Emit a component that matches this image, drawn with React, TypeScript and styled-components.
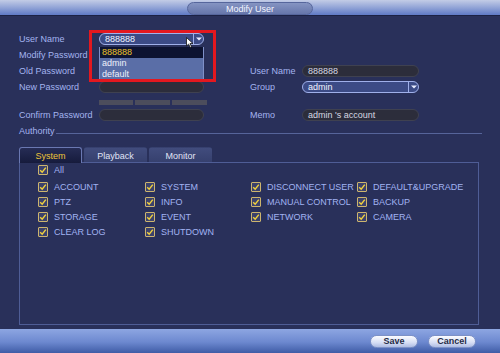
import React from 'react';
import styled, { createGlobalStyle } from 'styled-components';

const GlobalStyle = createGlobalStyle`
  html, body {
    margin: 0;
    padding: 0;
    background: #29305a;
  }
  body {
    font-family: "Liberation Sans", Arial, sans-serif;
  }
`;

const Screen = styled.div`
  width: 500px;
  height: 353px;
  display: flex;
  flex-direction: column;
  overflow: hidden;
  background: #29305a;
`;

const TitleBar = styled.div`
  height: 16px;
  flex: none;
  display: flex;
  align-items: center;
  justify-content: center;
  background: linear-gradient(#c3cce6 0%, #97a8d8 45%, #5f7ac6 100%);
  border-bottom: 1px solid #1c2246;
  box-sizing: border-box;
`;

const TitlePill = styled.div`
  width: 126px;
  height: 13px;
  margin-top: 2px;
  border-radius: 7px;
  background: linear-gradient(#8594c2, #6676ab);
  border: 1px solid #56669c;
  box-sizing: border-box;
  display: flex;
  align-items: center;
  justify-content: center;
  color: #f4f6ff;
  font-size: 9px;
`;

const Content = styled.div`
  flex: 1;
  padding: 0 21px 4px 19px;
  display: flex;
  flex-direction: column;
`;

const FormGrid = styled.div`
  margin-top: 15px;
  display: grid;
  grid-template-columns: 80px 105px 46px 52px 117px;
  grid-template-rows: 16px 16px 16px 16px 12px 16px;
  align-items: center;
`;

const Label = styled.div<{ $col: number; $row: number }>`
  grid-column: ${p => p.$col};
  grid-row: ${p => p.$row};
  color: #a4b4ef;
  font-size: 9px;
  white-space: nowrap;
`;

const Cell = styled.div<{ $col: number; $row: number }>`
  grid-column: ${p => p.$col};
  grid-row: ${p => p.$row};
  position: relative;
`;

const TextBox = styled.div`
  height: 12px;
  border-radius: 6px;
  background: #2c2d3b;
  border: 1px solid #3f4150;
  box-sizing: border-box;
  color: #d6d8e2;
  font-size: 9px;
  line-height: 10px;
  padding-left: 5px;
  white-space: nowrap;
`;

const SelectBox = styled.div`
  height: 12px;
  border-radius: 6px;
  background: #3c4b86;
  border: 1px solid #a0b0ea;
  box-sizing: border-box;
  display: flex;
  align-items: center;
  color: #f2f4ff;
  font-size: 9px;
`;

const SelectText = styled.span`
  flex: 1;
  padding-left: 5px;
  line-height: 10px;
`;

const SelectArrow = styled.span`
  width: 9px;
  height: 10px;
  border-left: 1px solid #a0b0ea;
  display: flex;
  align-items: center;
  justify-content: center;
`;

const Strength = styled.div`
  display: grid;
  grid-template-columns: 34px 35px 35px;
  gap: 2px;
  height: 5px;
  align-self: start;
  margin-top: 2px;
`;

const StrengthBar = styled.div`
  background: #4c4d5c;
`;

const DropList = styled.div`
  position: absolute;
  left: 0;
  top: 14px;
  width: 105px;
  border-left: 1px solid #7f90c8;
  border-right: 1px solid #7f90c8;
  box-sizing: border-box;
  background: #5a6ea7;
  z-index: 2;
`;

const DropItem = styled.div<{ $selected?: boolean }>`
  height: 11px;
  line-height: 11px;
  padding-left: 2px;
  font-size: 9px;
  color: ${p => (p.$selected ? '#ecc428' : '#eef1fb')};
  background: ${p => (p.$selected ? '#0d1331' : 'transparent')};
`;

const Highlight = styled.div`
  position: absolute;
  left: -10px;
  top: -3px;
  width: 127px;
  height: 52px;
  border: 3px solid #e3181f;
  box-sizing: border-box;
  z-index: 3;
  pointer-events: none;
`;

const Cursor = styled.svg`
  position: absolute;
  left: 87px;
  top: 4px;
  z-index: 4;
`;

const AuthorityRow = styled.div`
  margin-top: 2px;
  height: 12px;
  display: flex;
  align-items: center;
  gap: 1px;
  color: #a4b4ef;
  font-size: 9px;
`;

const Rule = styled.div`
  flex: 1;
  height: 1px;
  margin-top: 4px;
  margin-right: -3px;
  background: #56649a;
`;

const TabArea = styled.div`
  margin-top: 10px;
  width: 460px;
  flex: 1;
  display: flex;
  flex-direction: column;
`;

const TabStrip = styled.div`
  height: 16px;
  display: flex;
  gap: 2px;
  border-bottom: 1px solid #4f5d96;
  box-sizing: border-box;
`;

const Tab = styled.div<{ $active?: boolean }>`
  width: 63px;
  display: flex;
  align-items: center;
  justify-content: center;
  padding-top: 1px;
  font-size: 9px;
  box-sizing: border-box;
  border-radius: 3px 3px 0 0;
  color: ${p => (p.$active ? '#ecc43a' : '#e0e4f6')};
  background: ${p =>
    p.$active ? 'linear-gradient(#262c55, #161b3c)' : 'linear-gradient(#414c7d, #36406e)'};
  border: 1px solid ${p => (p.$active ? '#6a78b2' : 'transparent')};
  border-bottom: none;
  margin-bottom: ${p => (p.$active ? '-1px' : '0')};
`;

const Panel = styled.div`
  flex: 1;
  border: 1px solid #4f5d96;
  border-top: none;
  padding: 0 0 0 18px;
`;

const AllRow = styled.div`
  height: 14px;
  display: flex;
  align-items: center;
  margin-bottom: 2px;
`;

const CheckGrid = styled.div`
  display: grid;
  grid-template-columns: 107px 106px 106px 106px;
  grid-auto-rows: 15px;
  align-items: center;
`;

const CheckItem = styled.label`
  display: flex;
  align-items: center;
  gap: 6px;
  color: #a2b3f2;
  font-size: 9px;
  white-space: nowrap;
`;

const Box = styled.span`
  width: 10px;
  height: 10px;
  box-sizing: border-box;
  border: 1px solid #cdb56e;
  border-radius: 1px;
  background: #3b416c;
  display: flex;
  align-items: center;
  justify-content: center;
  flex: none;
`;

const BottomBar = styled.div`
  height: 24px;
  flex: none;
  display: flex;
  align-items: center;
  justify-content: flex-end;
  gap: 10px;
  padding-right: 24px;
  background: linear-gradient(#8da6e2 0%, #6c88cf 55%, #3f5ca6 100%);
`;

const Button = styled.div`
  width: 48px;
  height: 13px;
  border-radius: 7px;
  background: linear-gradient(#fbfcff, #d6def4 60%, #aebde4);
  border: 1px solid #7d91c6;
  box-sizing: border-box;
  display: flex;
  align-items: center;
  justify-content: center;
  color: #262b45;
  font-size: 9px;
  font-weight: bold;
`;

const Arrow = () => (
  <svg width="6" height="4" viewBox="0 0 6 4">
    <path d="M0 0.5 L6 0.5 L3 3.5 Z" fill="#e8ecff" />
  </svg>
);

const Check = () => (
  <svg width="8" height="8" viewBox="0 0 8 8">
    <path d="M1.2 4.2 L3.2 6.2 L6.8 1.6" fill="none" stroke="#f2d23c" strokeWidth="1.4" />
  </svg>
);

const CheckBox = ({ label }: { label: string }) => (
  <CheckItem>
    <Box>
      <Check />
    </Box>
    {label}
  </CheckItem>
);

const rights = [
  'ACCOUNT', 'SYSTEM', 'DISCONNECT USER', 'DEFAULT&UPGRADE',
  'PTZ', 'INFO', 'MANUAL CONTROL', 'BACKUP',
  'STORAGE', 'EVENT', 'NETWORK', 'CAMERA',
  'CLEAR LOG', 'SHUTDOWN',
];

export default function App() {
  return (
    <Screen>
      <GlobalStyle />
      <TitleBar>
        <TitlePill>Modify User</TitlePill>
      </TitleBar>
      <Content>
        <FormGrid>
          <Label $col={1} $row={1}>User Name</Label>
          <Cell $col={2} $row={1}>
            <SelectBox>
              <SelectText>888888</SelectText>
              <SelectArrow><Arrow /></SelectArrow>
            </SelectBox>
            <DropList>
              <DropItem $selected>888888</DropItem>
              <DropItem>admin</DropItem>
              <DropItem>default</DropItem>
            </DropList>
            <Highlight />
            <Cursor width="8" height="11" viewBox="0 0 8 11">
              <path d="M0.5 0.5 L0.5 9 L2.6 7.1 L4.2 10.5 L5.6 9.8 L4 6.6 L7 6.6 Z" fill="#ffffff" stroke="#111" strokeWidth="0.8" />
            </Cursor>
          </Cell>
          <Label $col={1} $row={2}>Modify Password</Label>
          <Label $col={1} $row={3}>Old Password</Label>
          <Label $col={1} $row={4}>New Password</Label>
          <Cell $col={2} $row={4}><TextBox /></Cell>
          <Cell $col={2} $row={5}>
            <Strength>
              <StrengthBar />
              <StrengthBar />
              <StrengthBar />
            </Strength>
          </Cell>
          <Label $col={1} $row={6}>Confirm Password</Label>
          <Cell $col={2} $row={6}><TextBox /></Cell>

          <Label $col={4} $row={3}>User Name</Label>
          <Cell $col={5} $row={3}><TextBox>888888</TextBox></Cell>
          <Label $col={4} $row={4}>Group</Label>
          <Cell $col={5} $row={4}>
            <SelectBox>
              <SelectText>admin</SelectText>
              <SelectArrow><Arrow /></SelectArrow>
            </SelectBox>
          </Cell>
          <Label $col={4} $row={6}>Memo</Label>
          <Cell $col={5} $row={6}><TextBox>admin 's account</TextBox></Cell>
        </FormGrid>

        <AuthorityRow>
          Authority
          <Rule />
        </AuthorityRow>

        <TabArea>
          <TabStrip>
            <Tab $active>System</Tab>
            <Tab>Playback</Tab>
            <Tab>Monitor</Tab>
          </TabStrip>
          <Panel>
            <AllRow>
              <CheckBox label="All" />
            </AllRow>
            <CheckGrid>
              {rights.map(r => (
                <CheckBox key={r} label={r} />
              ))}
            </CheckGrid>
          </Panel>
        </TabArea>
      </Content>
      <BottomBar>
        <Button>Save</Button>
        <Button>Cancel</Button>
      </BottomBar>
    </Screen>
  );
}
